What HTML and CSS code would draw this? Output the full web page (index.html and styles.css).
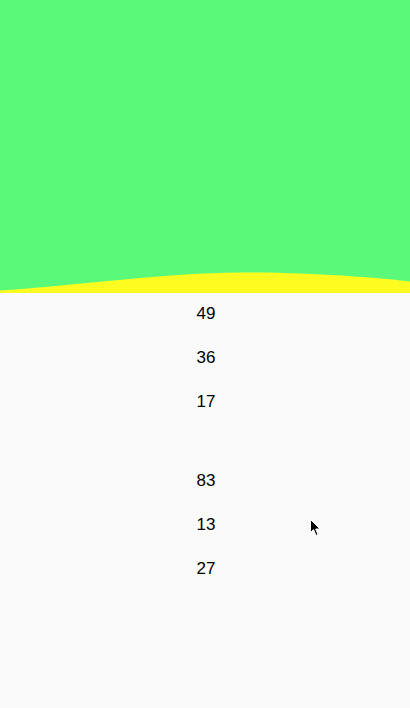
FILE: index.html
```html
<!DOCTYPE html>
<html>
<head>
<meta charset="utf-8">
<link rel="stylesheet" href="styles.css">
</head>
<body>
<div class="page">
  <header class="header">
    <div class="header-fill"></div>
    <svg class="wave" width="410" height="22" viewBox="0 0 410 22" preserveAspectRatio="none">
      <rect x="0" y="0" width="410" height="22" fill="#fdfb1f"/>
      <path d="M0 0 L0 19.5 C60 16 170 1.5 240 1.5 C310 1.5 370 6 410 10.5 L410 0 Z" fill="#5bf97a"/>
    </svg>
  </header>
  <ul class="list">
    <li class="item">49</li>
    <li class="item">36</li>
    <li class="item">17</li>
  </ul>
  <ul class="list list-second">
    <li class="item">83</li>
    <li class="item">13</li>
    <li class="item">27</li>
  </ul>
  <svg class="cursor" width="12" height="18" viewBox="0 0 12 18">
    <path d="M0.5 0.5 L0.5 13.5 L3.6 10.6 L6 16.5 L8 15.6 L5.7 10 L10 10 Z" fill="#000" stroke="#fff" stroke-width="1"/>
  </svg>
</div>
</body>
</html>
```
FILE: styles.css
```css
html, body {
  margin: 0;
  padding: 0;
  background: #fafafa;
}
.page {
  position: relative;
  width: 410px;
  height: 708px;
  overflow: hidden;
  background: #fafafa;
  font-family: "Liberation Sans", Arial, sans-serif;
}
.header {
  display: flex;
  flex-direction: column;
}
.header-fill {
  height: 271px;
  background: #5bf97a;
}
.wave {
  display: block;
  width: 410px;
  height: 22px;
}
.list {
  list-style: none;
  margin: 0;
  padding: 0;
  display: flex;
  flex-direction: column;
}
.list-second {
  margin-top: 35px;
}
.item {
  height: 44px;
  display: flex;
  align-items: center;
  justify-content: center;
  padding-left: 2px;
  padding-bottom: 2px;
  box-sizing: border-box;
  font-size: 17px;
  color: #000;
}
.cursor {
  position: absolute;
  left: 310px;
  top: 519px;
}
```
